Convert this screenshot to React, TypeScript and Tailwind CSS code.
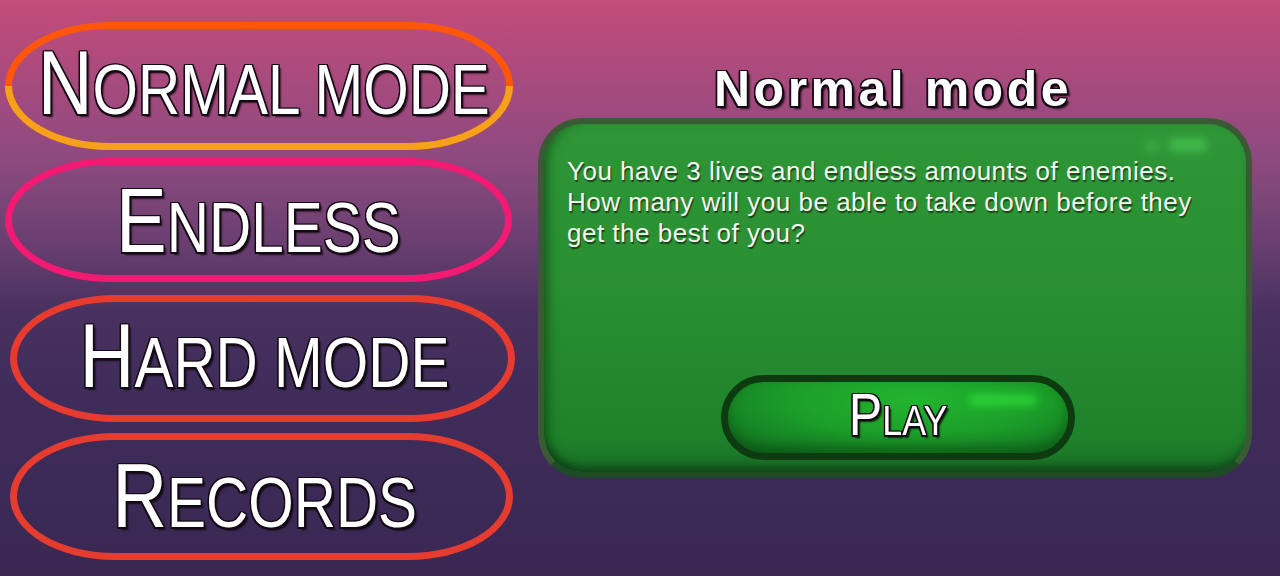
import React from "react";

type Mode = {
  first: string;
  rest: string;
  ring: string;
  lower?: string;
  box: string;
  label: string;
};

const modes: Mode[] = [
  {
    first: "N",
    rest: "ORMAL MODE",
    ring: "border-[#ff560c]",
    lower: "border-[#f6a11a]",
    box: "mt-[22px] ml-[5px] w-[508px] h-[128px]",
    label: "-mt-[8px] ml-[10px]",
  },
  {
    first: "E",
    rest: "NDLESS",
    ring: "border-[#f21a72]",
    box: "mt-[8px] ml-[5px] w-[507px] h-[124px]",
    label: "",
  },
  {
    first: "H",
    rest: "ARD MODE",
    ring: "border-[#e83b2f]",
    box: "mt-[13px] ml-[10px] w-[505px] h-[127px]",
    label: "-mt-[6px] ml-[4px]",
  },
  {
    first: "R",
    rest: "ECORDS",
    ring: "border-[#e63b2f]",
    box: "mt-[11px] ml-[10px] w-[503px] h-[127px]",
    label: "-mt-[2px] ml-[6px]",
  },
];

const outlined =
  "text-white [text-shadow:-1.5px_-1.5px_0_#140a14,1.5px_-1.5px_0_#140a14,-1.5px_1.5px_0_#140a14,1.5px_1.5px_0_#140a14,0_-1.5px_0_#140a14,0_1.5px_0_#140a14,-1.5px_0_0_#140a14,1.5px_0_0_#140a14,3px_3px_2px_rgba(0,0,0,0.75)]";

// no narrow face installed, so squeeze Liberation Sans to Arial Narrow proportions
const narrow = "font-['Liberation_Sans',Arial,sans-serif] scale-x-[0.835]";

function ModeButton({ mode }: { mode: Mode }) {
  return (
    <button className={`relative flex items-center justify-center ${mode.box}`}>
      <span className={`absolute inset-0 rounded-[105px/50%] border-[7px] ${mode.ring}`} />
      {mode.lower && (
        <span
          className={`absolute inset-0 rounded-[105px/50%] border-[7px] ${mode.lower} [clip-path:inset(50%_0_0_0)]`}
        />
      )}
      <span className={`relative whitespace-nowrap leading-none ${narrow} ${outlined} ${mode.label}`}>
        <span className="text-[91px]">{mode.first}</span>
        <span className="text-[70px]">{mode.rest}</span>
      </span>
    </button>
  );
}

export default function App() {
  return (
    <div className="w-[1280px] h-[576px] overflow-hidden flex bg-[linear-gradient(180deg,#c34c7a_0%,#a04a7e_18%,#8c4a7f_28%,#6a3f70_42%,#48315f_54%,#3f2c5a_68%,#3a2853_100%)]">
      <div className="w-[538px] flex flex-col">
        {modes.map((m) => (
          <ModeButton key={m.first} mode={m} />
        ))}
      </div>

      <div className="w-[714px] flex flex-col">
        <h1
          className={`mt-[64px] text-center text-[50px] font-bold leading-none tracking-[3.5px] pr-[4px] font-['Liberation_Sans',Arial,sans-serif] ${outlined}`}
        >
          Normal mode
        </h1>

        <div className="relative mt-[4px] h-[360px] rounded-[44px] border-[6px] border-[#3a5a35] border-b-[#1f4a26] bg-[linear-gradient(180deg,#2e9637_0%,#2a9033_45%,#1e822a_90%,#1a6f27_100%)] shadow-[inset_10px_0_12px_-6px_rgba(0,40,0,0.45),inset_0_-10px_10px_-4px_rgba(0,30,10,0.45)] flex flex-col">
          <span className="absolute right-[38px] top-[14px] w-[40px] h-[14px] rounded-full bg-[#4fcf55] opacity-60 blur-[4px]" />
          <span className="absolute right-[86px] top-[16px] w-[16px] h-[12px] rounded-full bg-[#46c04c] opacity-50 blur-[4px]" />

          <p className="pt-[32px] pl-[23px] pr-[40px] text-[26px] leading-[31px] tracking-[0.5px] text-[#f4f7f0] font-['Liberation_Sans',Arial,sans-serif] [text-shadow:1px_1.5px_1px_rgba(0,0,0,0.55)]">
            You have 3 lives and endless amounts of enemies. How many will you be able to take down before they
            get the best of you?
          </p>

          <div className="mt-auto mb-[12px] flex justify-center pl-[6px]">
            <button className="relative w-[354px] h-[85px] rounded-full border-[7px] border-[#0e3a10] bg-[radial-gradient(ellipse_at_55%_25%,#22b52f_0%,#1c9f2a_45%,#157f24_80%,#126b1f_100%)] shadow-[inset_0_-8px_12px_rgba(0,40,0,0.35)] flex items-center justify-center">
              <span className="absolute left-[240px] top-[12px] w-[70px] h-[12px] rounded-full bg-[#2ee03a] opacity-70 blur-[4px]" />
              <span className={`relative -mt-[6px] whitespace-nowrap leading-none ${narrow} ${outlined}`}>
                <span className="text-[60px]">P</span>
                <span className="text-[43px]">LAY</span>
              </span>
            </button>
          </div>
        </div>
      </div>
    </div>
  );
}
